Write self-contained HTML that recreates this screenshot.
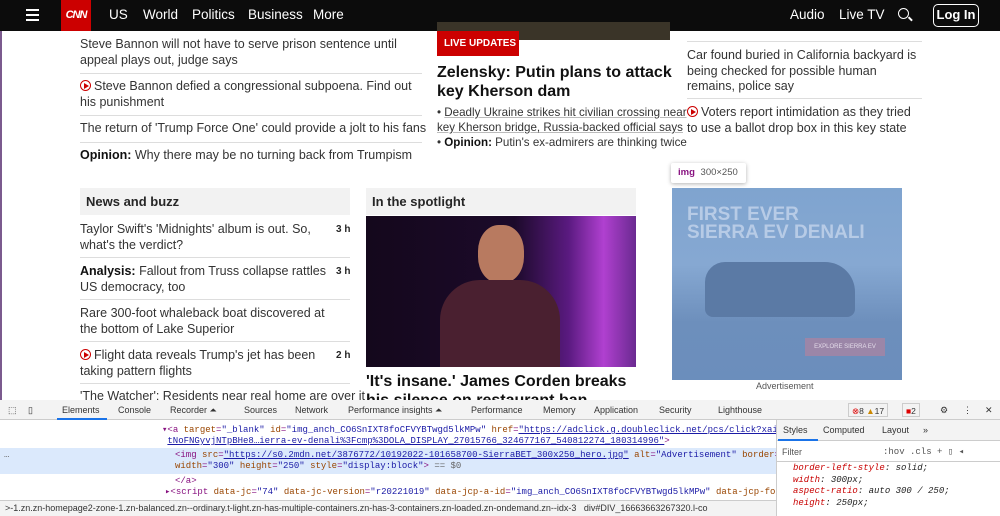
<!DOCTYPE html>
<html><head><meta charset="utf-8"><style>
*{box-sizing:border-box;margin:0;padding:0}
body{width:1000px;height:516px;overflow:hidden;background:#fff;font-family:"Liberation Sans",sans-serif;color:#262626;position:relative}
.a{position:absolute}
.nav{left:0;top:0;width:1000px;height:31px;background:#0c0c0c;color:#fff;font-size:13.5px}
.nav span{position:absolute;top:7px}
.t{font-size:12.5px;line-height:15.5px;color:#333}
.hr{height:1px;background:#ddd}
.play{display:inline-block;width:11px;height:11px;border:1.5px solid #c00;border-radius:50%;position:relative;vertical-align:-1px;margin-right:3px}
.play:after{content:"";position:absolute;left:3px;top:1.5px;border-left:5px solid #c00;border-top:3px solid transparent;border-bottom:3px solid transparent}
b{color:#111}
.mono{font-family:"Liberation Mono",monospace;font-size:9px}
</style></head><body>
<div class="a" style="left:0;top:0;width:2px;height:516px;background:#7b5a8e"></div>
<div class="a nav">
 <div class="a" style="left:26px;top:9px;width:13px;height:2px;background:#fff;box-shadow:0 5px #fff,0 10px #fff"></div>
 <div class="a" style="left:61px;top:0;width:30px;height:31px;background:#c00;font-weight:bold;font-size:11px;letter-spacing:-1px;text-align:center;line-height:31px;font-style:italic">CNN</div>
 <span style="left:109px">US</span><span style="left:143px">World</span><span style="left:192px">Politics</span><span style="left:248px">Business</span><span style="left:313px">More</span>
 <span style="left:790px">Audio</span><span style="left:839px">Live TV</span>
 <div class="a" style="left:898px;top:8px;width:11px;height:11px;border:1.5px solid #fff;border-radius:50%"></div>
 <div class="a" style="left:908px;top:18px;width:5px;height:1.5px;background:#fff;transform:rotate(45deg)"></div>
 <div class="a" style="left:933px;top:4px;width:46px;height:23px;border:1.5px solid #fff;border-radius:5px;font-weight:bold;text-align:center;line-height:20px;font-size:13px">Log In</div>
</div>
<!-- left top -->
<div class="a t" style="left:80px;top:37px;width:342px">Steve Bannon will not have to serve prison sentence until appeal plays out, judge says</div>
<div class="a hr" style="left:80px;top:73px;width:342px"></div>
<div class="a t" style="left:80px;top:79px;width:342px"><span class="play"></span>Steve Bannon defied a congressional subpoena. Find out his punishment</div>
<div class="a hr" style="left:80px;top:115px;width:342px"></div>
<div class="a t" style="left:80px;top:121px">The return of 'Trump Force One' could provide a jolt to his fans</div>
<div class="a hr" style="left:80px;top:142px;width:342px"></div>
<div class="a t" style="left:80px;top:148px"><b>Opinion:</b> Why there may be no turning back from Trumpism</div>
<!-- middle top -->
<div class="a" style="left:437px;top:22px;width:233px;height:18px;background:#3a3428"></div>
<div class="a" style="left:437px;top:31px;width:82px;height:25px;background:#cc0000;color:#fff;font-weight:bold;font-size:10px;line-height:25px;padding-left:7px">LIVE UPDATES</div>
<div class="a" style="left:437px;top:63px;font-weight:bold;font-size:16px;line-height:19px;color:#111;width:240px">Zelensky: Putin plans to attack key Kherson dam</div>
<div class="a" style="left:437px;top:105px;width:240px;font-size:11.6px;line-height:15px;color:#333;white-space:nowrap">• <u style="text-decoration-color:#bbb">Deadly Ukraine strikes hit civilian crossing near</u><br><u style="text-decoration-color:#bbb">key Kherson bridge, Russia-backed official says</u><br>• <b>Opinion:</b> Putin's ex-admirers are thinking twice</div>
<!-- right top -->
<div class="a hr" style="left:687px;top:41px;width:235px"></div>
<div class="a t" style="left:687px;top:48px;width:235px">Car found buried in California backyard is being checked for possible human remains, police say</div>
<div class="a hr" style="left:687px;top:98px;width:235px"></div>
<div class="a t" style="left:687px;top:105px;width:235px"><span class="play"></span>Voters report intimidation as they tried to use a ballot drop box in this key state</div>
<!-- news and buzz -->
<div class="a" style="left:80px;top:188px;width:270px;height:27px;background:#f2f2f2;font-weight:bold;font-size:13px;line-height:27px;padding-left:6px">News and buzz</div>
<div class="a t" style="left:80px;top:222px;width:250px">Taylor Swift's 'Midnights' album is out. So, what's the verdict?</div><div class="a" style="left:336px;top:224px;font-size:10px;font-weight:bold">3 h</div>
<div class="a hr" style="left:80px;top:257px;width:270px"></div>
<div class="a t" style="left:80px;top:264px;width:250px"><b>Analysis:</b> Fallout from Truss collapse rattles US democracy, too</div><div class="a" style="left:336px;top:266px;font-size:10px;font-weight:bold">3 h</div>
<div class="a hr" style="left:80px;top:299px;width:270px"></div>
<div class="a t" style="left:80px;top:306px;width:260px">Rare 300-foot whaleback boat discovered at the bottom of Lake Superior</div>
<div class="a hr" style="left:80px;top:341px;width:270px"></div>
<div class="a t" style="left:80px;top:348px;width:250px"><span class="play"></span>Flight data reveals Trump's jet has been taking pattern flights</div><div class="a" style="left:336px;top:350px;font-size:10px;font-weight:bold">2 h</div>
<div class="a hr" style="left:80px;top:383px;width:270px"></div>
<div class="a t" style="left:80px;top:389px;white-space:nowrap">'The Watcher': Residents near real home are over it</div>
<!-- spotlight -->
<div class="a" style="left:366px;top:188px;width:270px;height:27px;background:#f2f2f2;font-weight:bold;font-size:13px;line-height:27px;padding-left:6px">In the spotlight</div>
<div class="a" style="left:366px;top:216px;width:270px;height:151px;background:linear-gradient(90deg,#14081c 0%,#1c0a2a 55%,#5a1a80 75%,#b040d0 88%,#6a2a90 100%)"></div>
<div class="a" style="left:478px;top:225px;width:46px;height:58px;border-radius:45%;background:#b87a60"></div>
<div class="a" style="left:440px;top:280px;width:120px;height:87px;border-radius:40px 40px 0 0;background:#4a2030"></div>
<div class="a" style="left:366px;top:372px;font-weight:bold;font-size:16px;line-height:19px;color:#111;width:270px;white-space:nowrap">'It's insane.' James Corden breaks<br>his silence on restaurant ban</div>
<!-- ad -->
<div class="a" style="left:671px;top:163px;width:75px;height:20px;background:#fff;box-shadow:0 1px 4px rgba(0,0,0,.3);border-radius:2px;font-size:9.5px;line-height:20px;padding-left:7px"><b style="color:#881280">img</b> <span style="color:#555;margin-left:3px">300×250</span></div>
<div class="a" style="left:672px;top:188px;width:230px;height:192px;background:linear-gradient(180deg,#7fa4cf 0%,#86a8d2 40%,#6d8fbc 70%,#6b8ebc 100%)"></div>
<div class="a" style="left:687px;top:206px;color:#b7cbe6;font-weight:bold;font-size:19px;line-height:18px">FIRST EVER<br>SIERRA EV DENALI</div>
<div class="a" style="left:705px;top:262px;width:150px;height:55px;background:#5b7aa5;border-radius:20px 30px 8px 8px"></div>
<div class="a" style="left:805px;top:338px;width:80px;height:18px;background:#9b86a8;color:#e4dcea;font-size:6px;text-align:center;line-height:18px">EXPLORE SIERRA EV</div>
<div class="a" style="left:756px;top:381px;font-size:9px;color:#555">Advertisement</div>
<!-- devtools -->
<div class="a" style="left:0;top:400px;width:1000px;height:116px;background:#fff;border-top:1px solid #ccc"></div>
<div class="a" style="left:0;top:400px;width:1000px;height:20px;background:#f3f3f3;border-bottom:1px solid #ccc;font-size:9px;color:#333;line-height:20px">
 <span class="a" style="left:62px">Elements</span><span class="a" style="left:118px">Console</span><span class="a" style="left:170px">Recorder ⏶</span><span class="a" style="left:244px">Sources</span><span class="a" style="left:295px">Network</span><span class="a" style="left:348px">Performance insights ⏶</span><span class="a" style="left:471px">Performance</span><span class="a" style="left:543px">Memory</span><span class="a" style="left:594px">Application</span><span class="a" style="left:659px">Security</span><span class="a" style="left:718px">Lighthouse</span>
 <span class="a" style="left:848px;top:3px;height:14px;line-height:14px;border:1px solid #ccc;padding:0 3px;font-size:8.5px"><span style="color:#d00">⊗</span>8 <span style="color:#c80">▲</span>17</span>
 <span class="a" style="left:902px;top:3px;height:14px;line-height:14px;border:1px solid #ccc;padding:0 3px;font-size:8.5px"><span style="color:#d00">■</span>2</span>
 <span class="a" style="left:940px">⚙</span><span class="a" style="left:963px">⋮</span><span class="a" style="left:985px">✕</span>
 <span class="a" style="left:8px">⬚</span><span class="a" style="left:28px">▯</span>
</div>
<div class="a" style="left:57px;top:418px;width:50px;height:2px;background:#1a73e8"></div>
<div class="a" style="left:0;top:448px;width:776px;height:26px;background:#dbe9fc"></div>
<div class="a mono" style="left:162px;top:425px;line-height:11px;color:#881280;white-space:nowrap">▾&lt;a <span style="color:#994500">target</span>=<span style="color:#1a1aa6">"_blank"</span> <span style="color:#994500">id</span>=<span style="color:#1a1aa6">"img_anch_CO6SnIXT8foCFVYBTwgd5lkMPw"</span> <span style="color:#994500">href</span>=<u style="color:#1a1aa6">"https://adclick.g.doubleclick.net/pcs/click?xai=AKAOjs</u><br>&nbsp;<u style="color:#1a1aa6">tNoFNGyvjNTpBHe8…ierra-ev-denali%3Fcmp%3DOLA_DISPLAY_27015766_324677167_540812274_180314996"</u>&gt;</div>
<div class="a mono" style="left:175px;top:450px;line-height:11px;color:#881280;white-space:nowrap">&lt;img <span style="color:#994500">src</span>=<u style="color:#1a1aa6">"https://s0.2mdn.net/3876772/10192022-101658700-SierraBET_300x250_hero.jpg"</u> <span style="color:#994500">alt</span>=<span style="color:#1a1aa6">"Advertisement"</span> <span style="color:#994500">border</span>=<span style="color:#1a1aa6">"0"</span><br><span style="color:#994500">width</span>=<span style="color:#1a1aa6">"300"</span> <span style="color:#994500">height</span>=<span style="color:#1a1aa6">"250"</span> <span style="color:#994500">style</span>=<span style="color:#1a1aa6">"display:block"</span>&gt; <span style="color:#666">== $0</span></div>
<div class="a mono" style="left:4px;top:450px;color:#666">…</div>
<div class="a mono" style="left:175px;top:476px;color:#881280">&lt;/a&gt;</div>
<div class="a mono" style="left:165px;top:487px;color:#881280;white-space:nowrap">▸&lt;script <span style="color:#994500">data-jc</span>=<span style="color:#1a1aa6">"74"</span> <span style="color:#994500">data-jc-version</span>=<span style="color:#1a1aa6">"r20221019"</span> <span style="color:#994500">data-jcp-a-id</span>=<span style="color:#1a1aa6">"img_anch_CO6SnIXT8foCFVYBTwgd5lkMPw"</span> <span style="color:#994500">data-jcp-for-sure-</span></div>
<div class="a" style="left:0;top:500px;width:776px;height:16px;background:#f3f3f3;border-top:1px solid #ccc;font-size:9px;line-height:15px;white-space:nowrap;overflow:hidden;color:#333">&nbsp;&nbsp;&gt;-1.zn.zn-homepage2-zone-1.zn-balanced.zn--ordinary.t-light.zn-has-multiple-containers.zn-has-3-containers.zn-loaded.zn-ondemand.zn--idx-3 &nbsp;&nbsp;div#DIV_16663663267320.l-co</div>
<div class="a" style="left:776px;top:420px;width:224px;height:96px;border-left:1px solid #ccc;background:#fff"></div>
<div class="a" style="left:777px;top:420px;width:223px;height:21px;background:#f3f3f3;border-bottom:1px solid #ccc;font-size:9px;line-height:21px;color:#333"><span class="a" style="left:6px">Styles</span><span class="a" style="left:46px">Computed</span><span class="a" style="left:105px">Layout</span><span class="a" style="left:146px">»</span></div>
<div class="a" style="left:778px;top:439px;width:40px;height:2px;background:#1a73e8"></div>
<div class="a" style="left:777px;top:442px;width:223px;height:20px;border-bottom:1px solid #ccc;font-size:9px;line-height:20px;color:#555"><span class="a" style="left:5px">Filter</span><span class="a" style="left:106px;font-family:'Liberation Mono',monospace">:hov .cls + ▯ ◂</span></div>
<div class="a mono" style="left:793px;top:463px;line-height:11.5px;font-style:italic;color:#222;white-space:nowrap"><span style="color:#c80000">border-left-style</span>: solid;<br><span style="color:#c80000">width</span>: 300px;<br><span style="color:#c80000">aspect-ratio</span>: auto 300 / 250;<br><span style="color:#c80000">height</span>: 250px;</div>
</body></html>
